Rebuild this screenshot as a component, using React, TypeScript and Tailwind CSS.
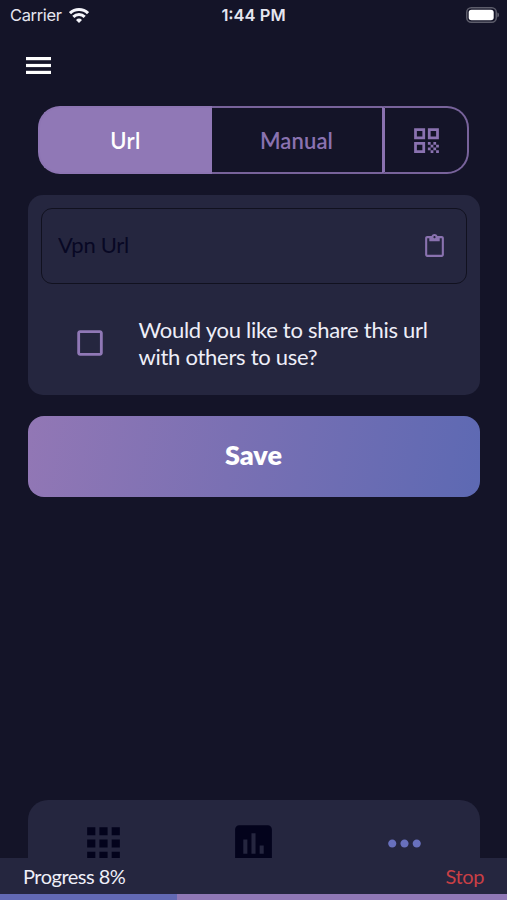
import React, { useState } from 'react';
import {
  MdApps,
  MdAssessment,
  MdCheckBox,
  MdCheckBoxOutlineBlank,
  MdContentPaste,
  MdMoreHoriz,
  MdQrCode,
} from 'react-icons/md';

const StatusBar: React.FC = () => (
  <div className="grid grid-cols-3 items-center h-[30px] pl-[10px] pr-[8px] shrink-0 font-['Inter',sans-serif] text-[16.5px] leading-none text-[#e6e6f0]">
    <div className="flex items-center gap-[7px]">
      <span className="tracking-[-0.35px]">Carrier</span>
      <svg width="20" height="15" viewBox="0 0 20 15" fill="none" stroke="#f4f4fa" strokeWidth="3">
        <path d="M1 5.2a13 13 0 0 1 18 0" />
        <path d="M4.3 8.9a8.2 8.2 0 0 1 11.4 0" />
        <path d="M10 15l-3-3.1a4.3 4.3 0 0 1 6 0z" fill="#f4f4fa" stroke="none" />
      </svg>
    </div>
    <span className="-ml-[2px] text-center font-semibold">1:44 PM</span>
    <svg className="justify-self-end -mt-px" width="33" height="16" viewBox="0 0 33 16">
      <rect x="0.75" y="0.75" width="29.5" height="14.5" rx="4.5" fill="none" stroke="#5d5d6b" strokeWidth="1.5" />
      <rect x="2.7" y="2.7" width="25" height="10.6" rx="2.8" fill="#fff" />
      <path d="M31.3 5.5a2.6 2.6 0 0 1 0 5z" fill="#5d5d6b" />
    </svg>
  </div>
);

const App: React.FC = () => {
  const [tab, setTab] = useState<'url' | 'manual' | 'qr'>('url');
  const [share, setShare] = useState(false);
  const progress = 8;

  const tabStyle = (name: string) =>
    tab === name ? 'bg-[#9078b6] border-[#8d75b3] text-white' : 'border-[#78639b] text-[#8a72b0]';

  return (
    <div className="flex flex-col w-[507px] h-[900px] overflow-hidden bg-[#141428] font-['Lato',sans-serif] text-[#eeeef8]">
      <StatusBar />

      <header className="flex items-center h-[76px] pl-[26px] pb-[5px] shrink-0">
        <button aria-label="Menu">
          <svg width="25" height="17" viewBox="0 0 25 17" fill="#fff">
            <rect width="25" height="3.2" />
            <rect y="6.9" width="25" height="3.2" />
            <rect y="13.8" width="25" height="3.2" />
          </svg>
        </button>
      </header>

      <main className="flex flex-col pl-[28px] pr-[27px] flex-1">
        <div className="flex h-[68px] ml-[10px] mr-[11px] text-[22px] font-semibold">
          <button
            onClick={() => setTab('url')}
            className={`w-[174px] pr-[1px] tracking-[0.3px] rounded-l-[22px] border-2 border-r-0 ${tabStyle('url')}`}
          >
            Url
          </button>
          <button
            onClick={() => setTab('manual')}
            className={`w-[170px] pr-[1px] tracking-[0.1px] border-y-2 ${tabStyle('manual')}`}
          >
            Manual
          </button>
          <button
            onClick={() => setTab('qr')}
            aria-label="Scan QR code"
            className={`flex-1 flex items-center justify-center rounded-r-[22px] border-2 border-l-3 border-l-[#8a72b0] ${tabStyle('qr')}`}
          >
            <MdQrCode size={33} />
          </button>
        </div>

        <section className="h-[200px] mt-[21px] p-[13px] rounded-[15px] bg-[#25263f]">
          <div className="flex items-center h-[76px] pl-[16px] pr-[19px] rounded-[11px] border border-[#11111f]">
            <input
              placeholder="Vpn Url"
              className="flex-1 min-w-0 pb-[3px] text-[22px] tracking-[-0.3px] bg-transparent outline-none placeholder:text-[#080824]"
            />
            <button aria-label="Paste">
              <MdContentPaste size={25} className="text-[#8a72b0]" />
            </button>
          </div>
          <div className="flex items-center mt-[32px] pl-[32px]">
            <button onClick={() => setShare(!share)} aria-label="Share url" className="text-[#9078b6]">
              {share ? <MdCheckBox size={34} /> : <MdCheckBoxOutlineBlank size={34} />}
            </button>
            <p className="ml-[31.5px] w-[310px] text-[22px] leading-[27px] tracking-[-0.28px]">
              Would you like to share this url with others to use?
            </p>
          </div>
        </section>

        <button className="h-[81px] mt-[21px] pb-[3px] pr-px rounded-[16px] bg-linear-[100deg,#9277b5,#7a70b3_45%,#5d69b3] text-[27px] font-extrabold text-white">
          Save
        </button>
      </main>

      <nav className="grid grid-cols-3 justify-items-center h-[58px] ml-[28px] mr-[27px] pt-[19px] shrink-0 overflow-hidden rounded-t-[20px] bg-[#25263f] text-[#03031c]">
        <MdApps size={49} />
        <MdAssessment size={49} />
        <MdMoreHoriz size={49} className="text-[#6870bd]" />
      </nav>

      <footer className="shrink-0 bg-[#25263f]">
        <div className="flex items-center justify-between h-[36px] px-[23px] text-[20px] tracking-[-0.5px]">
          <span>Progress {progress}%</span>
          <button className="tracking-[-0.4px] text-[#c93f45]">Stop</button>
        </div>
        <div className="h-[6px] bg-[#9078b6]">
          <div className="w-[177px] h-full bg-[#6269b4]" />
        </div>
      </footer>
    </div>
  );
};

export default App;
